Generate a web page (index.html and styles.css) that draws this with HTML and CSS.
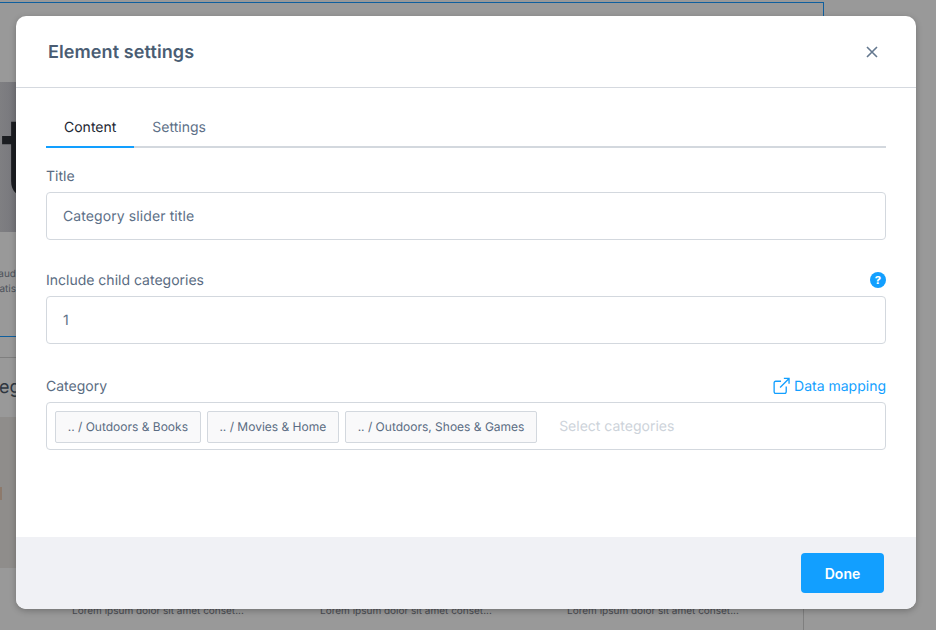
FILE: index.html
```html
<!DOCTYPE html>
<html lang="en">
<head>
    <meta charset="UTF-8">
    <meta name="viewport" content="width=device-width, initial-scale=1.0">
    <title>Element settings</title>
    <link rel="stylesheet" href="styles.css">
</head>
<body>
    <!-- page behind the modal -->
    <div class="backdrop">
        <div class="bg-frame"></div>
        <div class="bg-hero"><span class="bg-hero-letter">t</span></div>
        <p class="bg-text bg-text-a">aud</p>
        <p class="bg-text bg-text-b">atis</p>
        <div class="bg-line-grey"></div>
        <p class="bg-heading">eg</p>
        <div class="bg-image"><div class="bg-image-spot"></div></div>
        <p class="bg-lorem bg-lorem-1">Lorem ipsum dolor sit amet conset...</p>
        <p class="bg-lorem bg-lorem-2">Lorem ipsum dolor sit amet conset...</p>
        <p class="bg-lorem bg-lorem-3">Lorem ipsum dolor sit amet conset...</p>
        <div class="bg-vline"></div>
    </div>

    <div class="modal">
        <div class="modal-header">
            <h1>Element settings</h1>
            <button class="close" aria-label="Close">
                <svg width="12" height="12" viewBox="0 0 12 12"><path d="M1 1l10 10M11 1L1 11" stroke="#64788f" stroke-width="1.6" fill="none"/></svg>
            </button>
        </div>

        <div class="modal-body">
            <div class="tabs">
                <a href="#" class="tab active">Content</a>
                <a href="#" class="tab">Settings</a>
            </div>

            <div class="field">
                <div class="field-label"><label>Title</label></div>
                <div class="input">Category slider title</div>
            </div>

            <div class="field">
                <div class="field-label">
                    <label>Include child categories</label>
                    <span class="help">?</span>
                </div>
                <div class="input">1</div>
            </div>

            <div class="field">
                <div class="field-label">
                    <label class="label-low">Category</label>
                    <a href="#" class="mapping">
                        <svg width="17" height="18" viewBox="0 0 18 18" fill="none" stroke="#129fff" stroke-width="1.4"><path d="M14 9.5v5.7a1.6 1.6 0 0 1-1.6 1.6H2.8a1.6 1.6 0 0 1-1.6-1.6V5.6A1.6 1.6 0 0 1 2.8 4h5.7"/><path d="M11.5 1h5.5v5.5M17 1L7.5 10.5"/></svg>
                        Data mapping
                    </a>
                </div>
                <div class="input tags">
                    <span class="tag">.. / Outdoors &amp; Books</span>
                    <span class="tag">.. / Movies &amp; Home</span>
                    <span class="tag">.. / Outdoors, Shoes &amp; Games</span>
                    <span class="placeholder">Select categories</span>
                </div>
            </div>
        </div>

        <div class="modal-footer">
            <button class="done">Done</button>
        </div>
    </div>
</body>
</html>
```

FILE: styles.css
```css
*{
    box-sizing: border-box;
    margin:0;
    padding:0;
}
body{
    width:100%;
    height:630px;
    overflow:hidden;
    font-family:Inter, "Liberation Sans", sans-serif;
    text-rendering:geometricPrecision;
    background:#999999;
    color:#4a5d73;
}

/* page behind the modal, only slivers are visible */
.backdrop{
    position:absolute;
    top:0;
    left:0;
    width:936px;
    height:630px;
    overflow:hidden;
}
.bg-frame{
    position:absolute;
    top:2px;
    left:-2px;
    width:826px;
    height:335px;
    border:1px solid #0f5f9e;
}
.bg-hero{
    position:absolute;
    top:82px;
    left:0;
    width:16px;
    height:150px;
    background:linear-gradient(90deg,#7f7f82,#77777c);
    overflow:hidden;
}
.bg-hero-letter{
    position:absolute;
    left:1px;
    top:-1px;
    font-size:110px;
    line-height:150px;
    color:#1b1d21;
}
.bg-text{
    position:absolute;
    left:-8px;
    width:24px;
    text-align:right;
    font-size:10px;
    line-height:14px;
    color:#4c525a;
    overflow:hidden;
}
.bg-text-a{top:267px;}
.bg-text-b{top:282px;}
.bg-line-grey{
    position:absolute;
    top:357px;
    left:0;
    width:16px;
    height:1px;
    background:#7f7f7f;
}
.bg-heading{
    position:absolute;
    top:376px;
    left:-1px;
    font-size:18px;
    line-height:24px;
    color:#2e3640;
}
.bg-image{
    position:absolute;
    top:417px;
    left:0;
    width:16px;
    height:151px;
    background:#8f8d8b;
}
.bg-image-spot{
    position:absolute;
    top:70px;
    left:0;
    width:2px;
    height:13px;
    background:#8d7a6c;
}
.bg-lorem{
    position:absolute;
    top:604px;
    font-size:10px;
    line-height:14px;
    color:#4a4c52;
    white-space:nowrap;
}
.bg-lorem-1{left:72px;}
.bg-lorem-2{left:320px;}
.bg-lorem-3{left:567px;}
.bg-vline{
    position:absolute;
    top:600px;
    left:803px;
    width:1px;
    height:30px;
    background:#7f7f7f;
}

.modal{
    position:absolute;
    top:16px;
    left:16px;
    width:900px;
    height:593px;
    display:flex;
    flex-direction:column;
    background:white;
    border-radius:10px;
    overflow:hidden;
    box-shadow:0 2px 6px rgba(0,0,0,0.25);
}
.modal-header{
    height:72px;
    flex:none;
    display:flex;
    justify-content:space-between;
    align-items:center;
    padding:0 32px;
    border-bottom:1px solid #d5d9df;
}
.modal-header h1{
    padding-top:2px;
    font-size:18px;
    font-weight:600;
    letter-spacing:0.1px;
    color:#4a5d73;
}
.close{
    width:12px;
    height:12px;
    margin-right:6px;
    display:flex;
    border:none;
    background:none;
}
.modal-body{
    flex:1;
    padding:16px 30px 0;
}
.tabs{
    display:flex;
    height:44px;
    margin-bottom:16px;
    border-bottom:2px solid #d3d8de;
}
.tab{
    height:44px;
    padding:4px 18px 0;
    display:flex;
    align-items:center;
    font-size:14px;
    color:#5d7087;
    text-decoration:none;
    border-bottom:2px solid transparent;
}
.tab.active{
    color:#1d2733;
    border-bottom:2px solid #129fff;
}
.field{
    margin-bottom:28px;
}
.field-label{
    display:flex;
    justify-content:space-between;
    align-items:center;
    min-height:24px;
    margin-bottom:4px;
    font-size:14px;
    color:#5a6c82;
}
.field-label label{
    padding-top:1px;
}
.field-label .label-low{
    padding-top:3px;
}
.input{
    height:48px;
    display:flex;
    align-items:center;
    padding:0 16px;
    font-size:14px;
    letter-spacing:0.1px;
    color:#5d7087;
    background:white;
    border:1px solid #d3d8de;
    border-radius:4px;
}
.help{
    width:16px;
    height:16px;
    border-radius:50%;
    background:#129fff;
    color:white;
    font-size:11px;
    font-weight:800;
    line-height:16px;
    text-align:center;
}
.mapping{
    height:26px;
    padding-top:2px;
    display:flex;
    align-items:center;
    gap:4px;
    color:#129fff;
    text-decoration:none;
}
.tags{
    padding:0 8px;
    gap:6px;
    letter-spacing:0;
}
.tag{
    height:32px;
    margin-top:2px;
    padding:0 11.7px 2px;
    display:flex;
    align-items:center;
    font-size:12px;
    color:#5a6c82;
    background:#f9f9fa;
    border:1px solid #d3d8de;
    border-radius:2px;
}
.placeholder{
    margin-left:16px;
    color:#cdd3da;
}
.modal-footer{
    height:72px;
    flex:none;
    display:flex;
    justify-content:flex-end;
    align-items:center;
    padding:0 32px;
    background:#f0f1f5;
}
.done{
    width:83px;
    height:40px;
    border:none;
    border-radius:4px;
    background:#129fff;
    color:white;
    font-family:inherit;
    font-size:14px;
    font-weight:600;
}
```
